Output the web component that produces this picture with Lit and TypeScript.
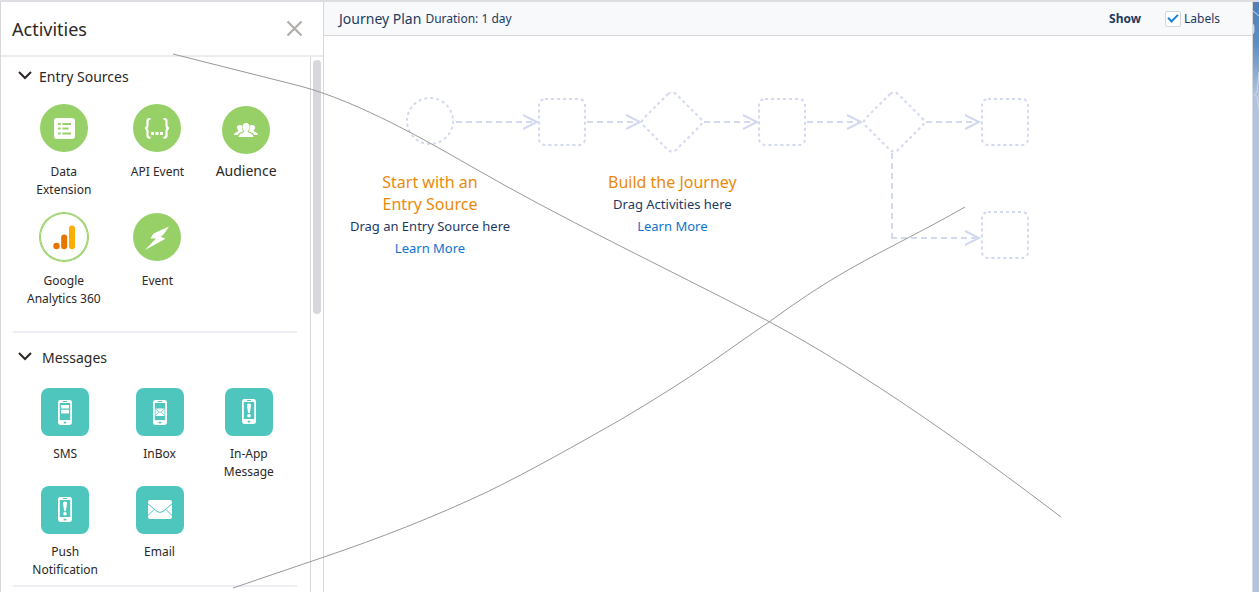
import { LitElement, html, svg, css } from "lit";
import { customElement, state } from "lit/decorators.js";

const phone = (y: number, screen: unknown) => svg`
  <rect x="17" y=${y} width="14" height="25" rx="2.4" fill="#fff"/>
  <rect x="18.8" y=${y + 3} width="10.4" height="17" fill="#4ec6bd"/>
  <rect x="22" y=${y + 1} width="4" height="1" fill="#4ec6bd"/>
  <rect x="22.5" y=${y + 21.8} width="3" height="1.6" rx="0.8" fill="#4ec6bd"/>
  ${screen}`;

const bang = (y: number) => svg`
  <path d="M24 ${y + 4.4}c1.5 0 2.2 1 2 2.4l-1 6.4q-.1 1-1 1t-1-1l-1-6.4c-.2-1.4 .5-2.4 2-2.4z" fill="#fff"/>
  <circle cx="24" cy=${y + 16.8} r="1.8" fill="#fff"/>`;

const glyphs: Record<string, unknown> = {
  data: svg`<rect x="14" y="14" width="21" height="21" rx="3" fill="#fff"/>
    <path d="M18 20h2.600M22.500 20h8.500M18 24.500h2.600M22.500 24.500h6M18 29.500h2.600M22.500 29.500h8.500" stroke="#97d067" stroke-width="2.200"/>`,
  api: svg`<g fill="none" stroke="#fff" stroke-width="2.2">
    <path d="M17.500 15h-.8q-2.200 0-2.200 2.200v4q0 2.600-2.200 3.100q2.200.5 2.200 3.100v4q0 2.200 2.200 2.200h.8"/>
    <path d="M30.500 15h.8q2.200 0 2.200 2.200v4q0 2.600 2.200 3.100q-2.200.5-2.200 3.100v4q0 2.200-2.200 2.200h-.8"/></g>
    <path d="M18 28h3v3h-3zM22.500 28h3v3h-3zM27 28h3v3h-3z" fill="#fff"/>`,
  audience: svg`<g fill="#fff">
    <path d="M24 17c2.400 0 3.600 1.700 3.600 4c0 1.800-.8 3-1.600 3.800c-.3.800 0 1.300.8 1.700c2.600 1 4.700 2.200 4.700 4.500h-15c0-2.300 2.100-3.500 4.700-4.500c.8-.4 1.100-.9.800-1.700c-.8-.8-1.600-2-1.600-3.800c0-2.300 1.200-4 3.600-4z"/>
    <path d="M17.800 19c1 0 1.800.3 2.200 1c-.4 2.200.2 4 1.300 5.200c-2.400 1-4.800 1.700-5.500 3.800h-3.800c0-1.800 1.700-2.700 3.700-3.500c.6-.4.8-.8.400-1.400c-.7-.6-1.200-1.400-1.200-2.300c0-1.800 1.100-2.800 2.900-2.800z"/>
    <path d="M30.200 19c-1 0-1.800.3-2.200 1c.4 2.200-.2 4-1.300 5.200c2.400 1 4.800 1.700 5.500 3.800h3.800c0-1.800-1.700-2.700-3.700-3.500c-.6-.4-.8-.8-.4-1.400c.7-.6 1.200-1.400 1.200-2.300c0-1.800-1.100-2.800-2.900-2.800z"/></g>`,
  analytics: svg`<circle cx="16.500" cy="33" r="3.200" fill="#e87400"/>
    <rect x="21.200" y="21.500" width="6" height="14.700" rx="3" fill="#e87400"/>
    <rect x="29" y="12.500" width="6" height="23.700" rx="3" fill="#fbad04"/>`,
  event: svg`<path d="M36 13.500L20.500 20.500L17.500 25.500L23 25.500L12 37L32.500 25.800L27.800 23.800L31 21z" fill="#fff"/>`,
  sms: phone(12, svg`<path d="M20 17h8v3.600h-8zM20 21.800h8v3.600h-8z" fill="#fff"/>`),
  inbox: phone(12, svg`<rect x="19.500" y="20.500" width="9" height="7.500" fill="#fff"/>
    <path d="M19.500 21l4.500 3.800l4.500-3.800M19.500 27.500l3-3.200M28.500 27.500l-3-3.200" fill="none" stroke="#4ec6bd" stroke-width=".7"/>`),
  alert: phone(11, bang(11)),
  email: svg`<rect x="12" y="14" width="24" height="19" rx="2" fill="#fff"/>
    <path d="M12 17.800l9 7.600q3 2.200 6 0l9-7.600M12 29.500l6.300-6.200M36 29.500l-6.300-6.200" fill="none" stroke="#4ec6bd" stroke-width="1"/>`,
};

interface Activity { label: string; glyph: string; kind: string }

const sources: Activity[] = [
  { label: "Data Extension", glyph: "data", kind: "round" },
  { label: "API Event", glyph: "api", kind: "round" },
  { label: "Audience", glyph: "audience", kind: "round large" },
  { label: "Google Analytics 360", glyph: "analytics", kind: "round ring" },
  { label: "Event", glyph: "event", kind: "round" },
];

const messages: Activity[] = [
  { label: "SMS", glyph: "sms", kind: "tile" },
  { label: "InBox", glyph: "inbox", kind: "tile" },
  { label: "In-App Message", glyph: "alert", kind: "tile" },
  { label: "Push Notification", glyph: "alert", kind: "tile" },
  { label: "Email", glyph: "email", kind: "tile" },
];

@customElement("activity-section")
class ActivitySection extends LitElement {
  static properties = { heading: {}, items: { attribute: false } };
  declare heading: string;
  declare items: Activity[];
  @state() private open = true;

  static styles = css`
    :host { display: block; border-bottom: 2px solid #eeeef4; }
    h2 { margin: 0; font-size: 14px; font-weight: 400; line-height: 20px; }
    .toggle { display: flex; align-items: center; gap: var(--heading-gap, 6px); padding: 0 0 0 4px; border: 0; background: none; font: inherit; color: inherit; }
    .chevron { width: 16px; height: 16px; }
    .grid { display: grid; grid-template-columns: 94fr 94fr 84fr; row-gap: var(--row-gap, 14px); padding: var(--grid-padding, 17px 9px 0 4px); }
    .item { display: flex; flex-direction: column; align-items: center; gap: var(--label-gap, 11px); padding: 0; border: 0; background: none; font: inherit; color: inherit; font-size: 12px; line-height: 18px; justify-content: flex-start; }
    .label { max-width: 80px; }
    .icon { width: 48px; height: 48px; box-sizing: border-box; flex: none; background: #4ec6bd; border-radius: 8px; }
    .round .icon { background: #97d067; border-radius: 50%; }
    .ring .icon { background: #fff; box-shadow: 0 0 0 1px #97d067, inset 0 0 0 1px #97d067; }
    .large { font-size: 14px; padding-top: 2px; gap: 8px; }
  `;

  render() {
    return html`
      <h2><button class="toggle" aria-expanded=${this.open} @click=${() => (this.open = !this.open)}>
        <svg class="chevron" viewBox="0 0 16 16"><path d="M2 3l6 6l6-6" fill="none" stroke="#2b2826" stroke-width="2"/></svg>
        <span>${this.heading}</span>
      </button></h2>
      ${this.open ? html`<div class="grid">${this.items.map((a) => html`
        <button class="item ${a.kind}">
          <svg class="icon" viewBox="0 0 48 48">${glyphs[a.glyph]}</svg>
          <span class="label">${a.label}</span>
        </button>`)}</div>` : ""}`;
  }
}

const arrow = (x1: number, x2: number, y: number) => svg`
  <path class="dash" d="M${x1} ${y}H${x2 - 2}"/><path class="head" d="M${x2 - 14} ${y - 7}L${x2} ${y}L${x2 - 14} ${y + 7}"/>`;
const box = (x: number, y: number) => svg`<rect class="dot" x=${x} y=${y} width="46" height="46" rx="6"/>`;
const diamond = (x: number, y: number) => svg`
  <path class="dot" d="M${x - 4} ${y - 28}q4-3 8 0l24 24q4 4 0 8l-24 24q-4 3-8 0l-24-24q-4-4 0-8z"/>`;

@customElement("app-root")
class AppRoot extends LitElement {
  static styles = css`
    :host { display: block; position: relative; font-family: "Noto Sans", sans-serif; color: #2b2826; }
    .page { display: grid; grid-template-columns: 324px 1fr 6px; height: 100vh; box-sizing: border-box; overflow: hidden; background: #fff; border-top: 2px solid #dddde2; }
    .panel { display: flex; flex-direction: column; min-height: 0; box-sizing: border-box; border: solid #d8d8dc; border-width: 0 1px; }
    .panel-head { display: flex; align-items: center; justify-content: space-between; flex: none; height: 53px; padding: 0 20px 0 11px; border-bottom: 2px solid #ececee; }
    h1 { margin: 0; font-size: 18px; font-weight: 400; line-height: 26px; }
    .close { display: flex; padding: 0; border: 0; background: none; }
    .close svg { width: 17px; height: 17px; }
    .scroll { display: flex; flex: 1; min-height: 0; }
    .list { flex: 1; min-width: 0; overflow: hidden; padding: 10px 13px 0 12px; }
    .first { padding-bottom: 23px; }
    .second { padding: 15px 0 6px; --row-gap: 5px; --label-gap: 9px; --heading-gap: 9px; --grid-padding: 20px 6px 0 5px; }
    .track { width: 13px; box-sizing: border-box; padding: 3px 2px; border-left: 1px solid #d8d8dc; }
    .thumb { width: 8px; height: 254px; border-radius: 4px; background: #d8d7dd; }
    .plan { display: flex; flex-direction: column; min-width: 0; border-right: 1px solid #d8d8dc; color: #223a63; }
    .bar { display: flex; align-items: center; gap: 4px; height: 33px; flex: none; padding: 0 32px 0 15px; background: #f8f9fb; border-bottom: 1px solid #d8d8dc; font-size: 12px; }
    .bar h2 { margin: 0; font-size: 14px; font-weight: 400; }
    .show { margin-left: auto; font-weight: 700; }
    .check { display: flex; align-items: center; gap: 3px; margin-left: 20px; }
    .check input { appearance: none; width: 16px; height: 16px; margin: 0; box-sizing: border-box; border: 1px solid #d5d5da; border-radius: 2px; background: #fff; display: grid; place-items: center; }
    .check input:checked::before { content: ""; width: 8px; height: 4px; margin-bottom: 3px; border: solid #1b7fdc; border-width: 0 0 2px 2px; transform: rotate(-45deg); }
    .flow { display: block; width: 720px; height: 180px; margin: 44px 0 0 76px; overflow: visible; }
    .dot, .dash, .head { fill: none; stroke: #d3d9f0; stroke-width: 2; }
    .dot { stroke-dasharray: 3 3; }
    .dash { stroke-dasharray: 6 4; }
    .captions { display: flex; align-items: flex-start; gap: 98px; margin: -89px 0 0 26px; text-align: center; font-size: 13px; line-height: 22px; white-space: nowrap; }
    .captions h3 { margin: 0; font-size: 16px; font-weight: 400; line-height: 22px; color: #ea8a0c; }
    .captions p { margin: 0; }
    .captions a { color: #0e74d0; text-decoration: none; }
    .start { width: 160px; display: flex; flex-direction: column; align-items: center; }
    .start h3 { width: 100px; white-space: normal; }
    .edge { width: 6px; height: 100%; background: #b0c4e0; }
    .marks { position: absolute; left: 0; top: 0; width: 1259px; height: 592px; pointer-events: none; }
  `;

  render() {
    return html`
      <div class="page">
        <aside class="panel">
          <header class="panel-head">
            <h1>Activities</h1>
            <button class="close" aria-label="Close"><svg viewBox="0 0 17 17"><path d="M1.500 1.500l14 14M15.500 1.500l-14 14" stroke="#b0adab" stroke-width="2.200"/></svg></button>
          </header>
          <div class="scroll">
            <div class="list">
              <activity-section class="first" .heading=${"Entry Sources"} .items=${sources}></activity-section>
              <activity-section class="second" .heading=${"Messages"} .items=${messages}></activity-section>
            </div>
            <div class="track"><div class="thumb"></div></div>
          </div>
        </aside>
        <main class="plan">
          <header class="bar">
            <h2>Journey Plan</h2><span>Duration: 1 day</span>
            <span class="show">Show</span>
            <label class="check"><input type="checkbox" checked />Labels</label>
          </header>
          <svg class="flow" viewBox="400 80 720 180">
            <circle class="dot" cx="430" cy="121" r="23"/>
            ${arrow(456, 537, 122)}${box(539, 99)}
            ${arrow(587, 640, 122)}${diamond(672, 122)}
            ${arrow(704, 757, 122)}${box(759, 99)}
            ${arrow(807, 861, 122)}${diamond(894, 122)}
            ${arrow(926, 979, 122)}${box(982, 99)}
            <path class="dash" d="M892 153V238"/>
            ${arrow(891, 979, 238)}${box(982, 212)}
          </svg>
          <div class="captions">
            <section class="start">
              <h3>Start with an Entry Source</h3>
              <p>Drag an Entry Source here</p>
              <a href="#">Learn More</a>
            </section>
            <section>
              <h3>Build the Journey</h3>
              <p>Drag Activities here</p>
              <a href="#">Learn More</a>
            </section>
          </div>
        </main>
        <svg class="edge" viewBox="0 0 6 590" preserveAspectRatio="none">
          <defs><linearGradient id="sky" x2="0" y2="1"><stop offset="0" stop-color="#4d80b6"/><stop offset=".07" stop-color="#5f8dc0"/><stop offset=".16" stop-color="#b0c4e0"/></linearGradient></defs>
          <rect width="6" height="590" fill="url(#sky)"/>
          <path d="M0 9l6 5M6 70l-2 20l-3 4M6 93q-3 2-1 7l1 8" fill="none" stroke="#c9daec" stroke-width="1"/>
          <ellipse cx="0" cy="27" rx="1.500" ry="5" fill="#c9daec"/>
        </svg>
      </div>
      <svg class="marks" viewBox="0 0 1259 592" fill="none" stroke="#999" stroke-width="1">
        <path d="M173 54L300 86C360 102 430 143 467 164C560 218 660 265 768 321C870 376 970 448 1061 517"/>
        <path d="M233 588L324 557C380 538 434 517 487 492C532 470 576 445 620 420C652 401 683 382 713 361C733 347 751 334 769 322C795 303 820 286 848 270C885 249 925 230 965 207"/>
      </svg>`;
  }
}
